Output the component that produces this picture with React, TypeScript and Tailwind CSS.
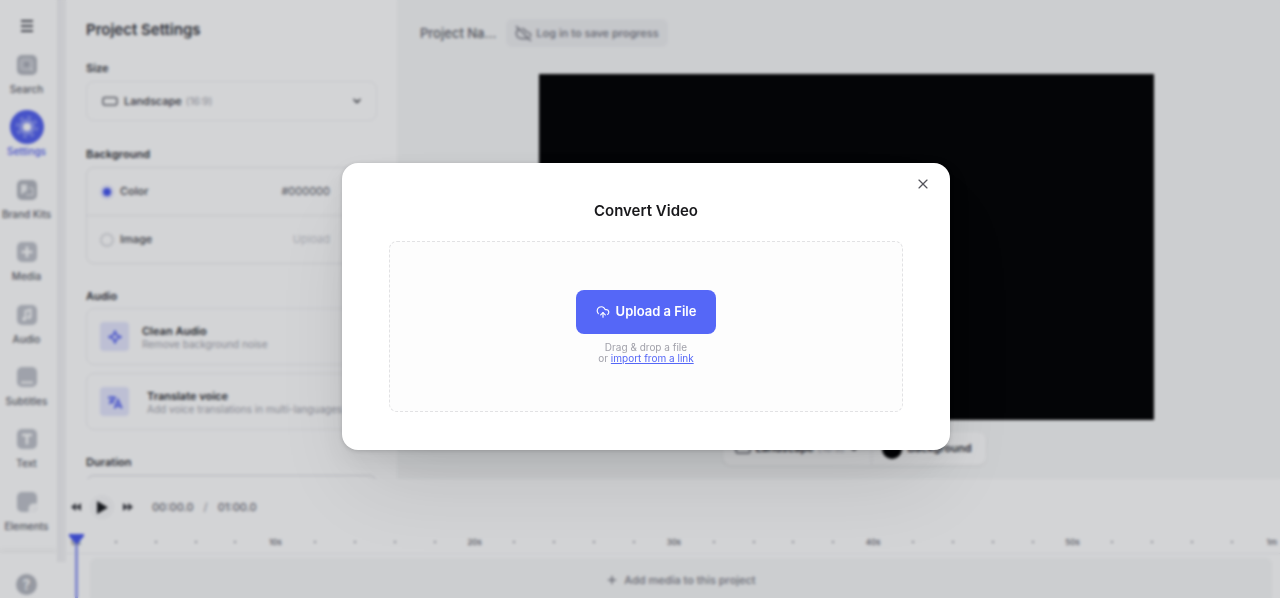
import React from "react";
import { ChevronDown, CloudOff, CloudUpload, Plus, X } from "lucide-react";

type IconName =
  | "search"
  | "settings"
  | "brand"
  | "media"
  | "audio"
  | "subtitles"
  | "text"
  | "elements";

const navItems: { id: IconName; label: string }[] = [
  { id: "search", label: "Search" },
  { id: "settings", label: "Settings" },
  { id: "brand", label: "Brand Kits" },
  { id: "media", label: "Media" },
  { id: "audio", label: "Audio" },
  { id: "subtitles", label: "Subtitles" },
  { id: "text", label: "Text" },
  { id: "elements", label: "Elements" },
];

function NavIcon({ name }: { name: IconName }) {
  if (name === "settings") {
    return (
      <svg viewBox="0 0 34 34" className="size-[34px]" aria-hidden="true">
        <circle cx="17" cy="17" r="17" fill="#5260ee" />
        <circle cx="17" cy="17" r="8" fill="#8e99f6" />
        <circle cx="17" cy="17" r="10" fill="none" stroke="#8e99f6" strokeWidth="2" strokeDasharray="4 3.85" />
        <circle cx="17" cy="17" r="4" fill="#fff" />
      </svg>
    );
  }
  return (
    <svg viewBox="0 0 20 20" className="size-5" fill="none" aria-hidden="true">
      <rect width="20" height="20" rx="5" fill={name === "search" || name === "brand" ? "#b4b7bf" : "#bfc2ca"} />
      {name === "search" && (
        <>
          <rect x="3.5" y="4" width="12" height="11" rx="3" fill="#c3c5cd" stroke="#dcdde2" />
          <circle cx="9.5" cy="9.5" r="2.4" fill="#a3a6b0" />
          <path d="M13 13l3 3" stroke="#e6e7ea" strokeWidth="1.5" />
        </>
      )}
      {name === "brand" && (
        <>
          <path d="M4 4.5h6v6l-6 4z" fill="#f2f3f5" />
          <path d="M12 8h2.500a1.500 1.500 0 0 1 1.500 1.500V15H9" stroke="#e4e5e9" strokeWidth="1.500" />
        </>
      )}
      {name === "media" && <path d="M10 4.500v11M4.500 10h11" stroke="#fff" strokeWidth="2.600" />}
      {name === "audio" && (
        <>
          <path d="M8.500 14V6l5-1.500v8" stroke="#fff" strokeWidth="2" />
          <circle cx="7.200" cy="14" r="2" fill="#fff" />
          <circle cx="12.200" cy="12.500" r="1.800" fill="#fff" />
        </>
      )}
      {name === "subtitles" && <path d="M4 15.500h12" stroke="#fff" strokeWidth="2" />}
      {name === "text" && <path d="M5 6h10M10 6v9.500" stroke="#fff" strokeWidth="2.600" />}
      {name === "elements" && (
        <path d="M20 11.500h-3.500a5 5 0 0 0-5 5V20h3a5.500 5.500 0 0 0 5.500-5.500z" fill="#fafafb" />
      )}
    </svg>
  );
}

function Landscape() {
  return (
    <svg viewBox="0 0 16 10" className="h-2.5 w-4" fill="none" aria-hidden="true">
      <rect x="1" y="1.500" width="14" height="7.500" rx="2" stroke="#6a6b74" strokeWidth="1.500" />
    </svg>
  );
}

function Sidebar() {
  return (
    <aside className="flex w-[57px] shrink-0 flex-col bg-white">
      <div className="flex h-[34px] shrink-0 items-end pb-0.5 pl-[21px]">
        <button aria-label="Menu">
          <svg viewBox="0 0 12 12" className="size-3" aria-hidden="true">
            <path d="M0 1h12M0 6h12M0 11h12" stroke="#4b4c55" strokeWidth="2" />
          </svg>
        </button>
      </div>
      <nav className="flex min-h-0 flex-1 flex-col pb-5 pr-1">
        {navItems.map((item) => (
          <button key={item.id} className="flex flex-1 flex-col items-center pt-3.5">
            <span className="flex h-[34px] items-center">
              <NavIcon name={item.id} />
            </span>
            <span
              className={
                item.id === "settings"
                  ? "mt-px text-[10px] font-medium leading-3 whitespace-nowrap text-[#5563f0]"
                  : "mt-px text-[10px] font-medium leading-3 whitespace-nowrap text-[#62636c]"
              }
            >
              {item.label}
            </span>
          </button>
        ))}
      </nav>
      <div className="flex h-[45px] shrink-0 items-end justify-center pb-[3px] pr-1 shadow-[0_-3px_6px_rgba(0,0,0,0.05)]">
        <button aria-label="Help" className="size-[21px] rounded-full bg-[#b4b7bf] text-sm font-bold leading-5 text-white">
          ?
        </button>
      </div>
    </aside>
  );
}

function AudioCard({ title, text, wide, children }: { title: string; text: string; wide?: boolean; children: React.ReactNode }) {
  return (
    <button className="flex h-[57px] items-center rounded-lg border border-[#f0f0f3] pl-[13px] text-left">
      <span className="flex size-[29px] shrink-0 items-center justify-center rounded bg-[#e4e6fd]">{children}</span>
      <span className={wide ? "ml-[18px] flex flex-col" : "ml-[13px] flex flex-col"}>
        <span className="text-[11px] font-semibold leading-[14px] text-[#2c2d33]">{title}</span>
        <span className="text-[10px] leading-3 whitespace-nowrap text-[#a3a4ad]">{text}</span>
      </span>
    </button>
  );
}

function SettingsPanel() {
  return (
    <section className="flex w-[331px] shrink-0 flex-col overflow-hidden bg-white pl-5 pr-5">
      <h1 className="mt-5 text-[15px] font-semibold leading-5 text-[#34353c]">Project Settings</h1>
      <h2 className="mt-5 text-[11px] font-semibold leading-4 text-[#34353c]">Size</h2>
      <label className="mt-[5px] flex h-10 shrink-0 items-center rounded-lg border border-[#f2f2f4] px-[15px] text-[#34353c]">
        <Landscape />
        <select aria-label="Size" className="ml-1.5 appearance-none bg-transparent text-[11px] font-medium [field-sizing:content]">
          <option>Landscape</option>
        </select>
        <span className="ml-1 text-[10px] text-[#a3a4ad]">(16:9)</span>
        <ChevronDown className="-mr-0.5 ml-auto size-3" strokeWidth={3} />
      </label>
      <h2 className="mt-[25px] text-[11px] font-semibold leading-4 text-[#34353c]">Background</h2>
      <div className="mt-[5px] flex h-[97px] shrink-0 flex-col rounded-lg border border-[#e9e9ec]">
        <div className="flex flex-1 items-center border-b border-[#ececef] px-[13px]">
          <input
            id="bg-color"
            type="radio"
            name="background"
            defaultChecked
            className="size-3.5 appearance-none rounded-full border-[#dfe2fd] bg-[#dfe2fd] checked:border-[3px] checked:bg-[#4656ee]"
          />
          <label htmlFor="bg-color" className="ml-1.5 text-[11px] font-medium text-[#45464e]">
            Color
          </label>
          <input
            aria-label="Color value"
            defaultValue="#000000"
            className="ml-auto w-[60px] bg-transparent text-right text-[11px] text-[#55565f]"
          />
          <span className="ml-[15px] size-[18px] rounded bg-black" />
        </div>
        <div className="flex flex-1 items-center px-[13px]">
          <input
            id="bg-image"
            type="radio"
            name="background"
            className="size-3.5 appearance-none rounded-full border-2 border-[#dcdde1]"
          />
          <label htmlFor="bg-image" className="ml-1.5 text-[11px] font-medium text-[#45464e]">
            Image
          </label>
          <button className="ml-auto mr-[33px] text-[11px] text-[#c8c9cf]">Upload</button>
        </div>
      </div>
      <h2 className="mt-6 text-[11px] font-semibold leading-4 text-[#34353c]">Audio</h2>
      <div className="mt-1 flex flex-col gap-2">
        <AudioCard title="Clean Audio" text="Remove background noise">
          <svg viewBox="0 0 14 14" className="size-3.5" aria-hidden="true">
            <path d="M7 1.500L8.800 5.200 12.500 7 8.800 8.800 7 12.500 5.200 8.800 1.500 7l3.700-1.800z" fill="none" stroke="#6470f2" strokeWidth="2" />
          </svg>
        </AudioCard>
        <AudioCard title="Translate voice" text="Add voice translations in multi-languages" wide>
          <svg viewBox="0 0 16 14" className="h-3.5 w-4" fill="none" stroke="#6470f2" strokeWidth="2" aria-hidden="true">
            <path d="M1 2.500h8M5 1v1.500M7.500 2.500C7 5 5 7 2 8.500M3 4.500c1 2 2.500 3 4 3.500" />
            <path d="M7.500 13.500L11 5l3.800 8.500M8.800 11h4.600" />
          </svg>
        </AudioCard>
      </div>
      <h2 className="mt-6 text-[11px] font-semibold leading-4 text-[#34353c]">Duration</h2>
      <div className="mt-[5px] h-12 shrink-0 rounded-lg border border-[#d8d8de]" />
    </section>
  );
}

function Stage() {
  return (
    <section className="flex min-w-0 flex-1 flex-col bg-[#f7f8f8]">
      <header className="flex h-[74px] shrink-0 items-start pl-[23px] pt-[19px]">
        <span className="text-[13px] font-medium leading-7 whitespace-nowrap text-[#62636c]">Project Na...</span>
        <button className="ml-2.5 flex h-7 items-center gap-1 rounded-md bg-[#eeeff1] px-[9px] text-[11px] font-medium text-[#74757f]">
          <CloudOff className="size-[17px]" />
          Log in to save progress
        </button>
      </header>
      <div className="flex min-h-0 flex-1 justify-center pl-4">
        <div className="aspect-video h-full bg-black" />
      </div>
      <div className="mb-3.5 mt-3 flex shrink-0 justify-center pl-8">
        <div className="flex h-[33px] items-center rounded-lg bg-white shadow-[0_1px_3px_rgba(0,0,0,0.08)]">
          <button className="flex h-full items-center border-r border-[#eeeef1] pl-3 pr-3 text-[11px] font-semibold text-[#34353c]">
            <Landscape />
            <span className="ml-1">Landscape</span>
            <span className="ml-1 text-[10px] font-normal text-[#a3a4ad]">(16:9)</span>
            <ChevronDown className="ml-1 size-2.5" strokeWidth={3} />
          </button>
          <button className="flex h-full items-center gap-1.5 pl-2.5 pr-3.5 text-[11px] font-semibold text-[#34353c]">
            <span className="size-5 rounded-full bg-black" />
            Background
          </button>
        </div>
      </div>
    </section>
  );
}

const ticks = Array.from({ length: 31 }, (_, i) => i);

function tickLabel(i: number) {
  if (i === 30) return "1m";
  return i % 5 === 0 ? `${i * 2}s` : "";
}

function Timeline() {
  return (
    <section className="relative flex h-[119px] shrink-0 flex-col bg-white">
      <div className="flex h-14 items-center pl-1 text-[11px] font-medium text-[#6d6e78]">
        <button aria-label="Rewind" className="flex size-3 items-center justify-center rounded-full">
          <svg viewBox="0 0 10 8" className="h-2 w-2.5" fill="#34353c" aria-hidden="true">
            <path d="M5 0v8L0 4zM10 0v8L5 4z" />
          </svg>
        </button>
        <button aria-label="Play" className="ml-2 flex size-6 items-center justify-center rounded-full bg-[#f8f8f9]">
          <svg viewBox="0 0 10 12" className="h-[13px] w-[11px]" fill="#17181c" aria-hidden="true">
            <path d="M0 0l10 6-10 6z" />
          </svg>
        </button>
        <button aria-label="Fast forward" className="ml-2 flex size-3 items-center justify-center rounded-full">
          <svg viewBox="0 0 10 8" className="h-2 w-2.5" fill="#34353c" aria-hidden="true">
            <path d="M0 0l5 4-5 4zM5 0l5 4-5 4z" />
          </svg>
        </button>
        <span className="ml-[18px]">00:00.0</span>
        <span className="mx-2.5 text-[#a3a4ad]">/</span>
        <span>01:00.0</span>
      </div>
      <div className="flex h-[19px] justify-between border-b border-[#f2f2f4] pb-1 pl-2.5 pr-2">
        {ticks.map((i) => (
          <span key={i} className="flex w-0 items-center justify-center text-[8px] font-medium leading-3 text-[#62636c]">
            {tickLabel(i) || <span className="size-0.5 shrink-0 rounded-full bg-[#8b8c95]" />}
          </span>
        ))}
      </div>
      <button className="ml-6 mr-2 mt-1 flex min-h-0 flex-1 items-center justify-center gap-1.5 rounded-t-md bg-[#f7f8f8] pt-1 text-[11px] font-medium text-[#7c7d87]">
        <Plus className="size-3" strokeWidth={3} />
        Add media to this project
      </button>
      <div className="absolute bottom-0 left-[3px] top-[55px] flex flex-col items-center">
        <svg viewBox="0 0 15 11" className="h-[11px] w-[15px] shrink-0" fill="#4656ee" aria-hidden="true">
          <path d="M0 0h15v2L7.500 11 0 2z" />
        </svg>
        <div className="w-[3px] flex-1 bg-[#98a1f4]" />
      </div>
    </section>
  );
}

function ConvertDialog() {
  return (
    <div className="fixed inset-0 flex items-center justify-center bg-[#141824]/19 pl-3 pt-[15px] backdrop-blur-[1.75px]">
      <div
        role="dialog"
        aria-modal="true"
        aria-labelledby="dialog-title"
        className="w-full max-w-[608px] rounded-2xl bg-white px-[47px] pb-[38px] shadow-[0_1px_4px_rgba(0,0,0,0.15),0_10px_24px_rgba(0,0,0,0.07),0_45px_80px_-20px_rgba(0,0,0,0.12)]"
      >
        <div className="flex justify-end pt-[13px]">
          <button aria-label="Close" className="-mr-7 flex size-4 items-center justify-center text-[#55555c]">
            <X className="size-4 shrink-0" strokeWidth={1.75} />
          </button>
        </div>
        <h2 id="dialog-title" className="mt-[9px] text-center text-[15px] font-semibold leading-5 text-[#18181b]">
          Convert Video
        </h2>
        <div className="mt-5 flex flex-col items-center rounded-lg border border-dashed border-[#e2e2e4] bg-[#fdfdfd] pb-[47px] pt-12">
          <button className="flex h-11 items-center gap-1.5 rounded-lg bg-[#5567f7] px-5 text-[13px] font-semibold text-white">
            <CloudUpload className="size-3.5" />
            Upload a File
          </button>
          <p className="mt-2 text-center text-[10px] leading-[11px] text-[#a1a1aa]">
            Drag &amp; drop a file
            <br />
            or{" "}
            <a href="#link" className="text-[#5567f7] underline">
              import from a link
            </a>
          </p>
        </div>
      </div>
    </div>
  );
}

export default function App() {
  return (
    <div className="flex h-screen overflow-hidden bg-white font-['Inter',sans-serif]">
      <Sidebar />
      <div className="flex w-[9px] shrink-0 flex-col bg-white">
        <div className="flex-1 bg-linear-to-r from-[#f0f0f2] to-[#f5f5f6]" />
        <div className="h-9" />
      </div>
      <div className="flex min-w-0 flex-1 flex-col">
        <main className="flex min-h-0 flex-1">
          <SettingsPanel />
          <Stage />
        </main>
        <Timeline />
      </div>
      <ConvertDialog />
    </div>
  );
}
